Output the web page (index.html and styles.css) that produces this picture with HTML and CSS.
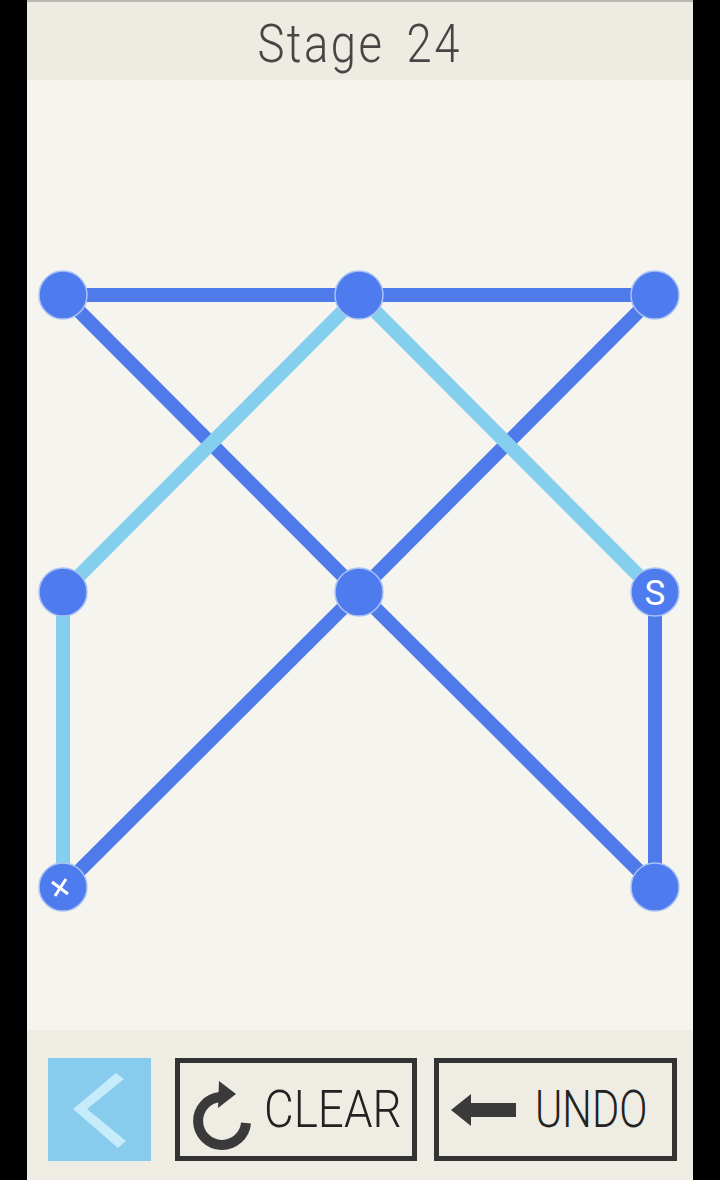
FILE: index.html
```html
<!DOCTYPE html>
<html>
<head>
<meta charset="utf-8">
<link rel="stylesheet" href="styles.css">
</head>
<body>
<div class="app">
  <header class="header"><span class="title">Stage 24</span></header>
  <main class="board">
    <svg class="graph" width="666" height="950" viewBox="27 80 666 950">
      <g class="edge dark">
        <line x1="63" y1="295" x2="359" y2="295"/>
        <line x1="359" y1="295" x2="655" y2="295"/>
        <line x1="63" y1="295" x2="359" y2="592"/>
        <line x1="655" y1="295" x2="359" y2="592"/>
        <line x1="359" y1="592" x2="63" y2="887"/>
        <line x1="359" y1="592" x2="655" y2="887"/>
        <line x1="655" y1="592" x2="655" y2="887"/>
      </g>
      <g class="edge light">
        <line x1="359" y1="295" x2="63" y2="592"/>
        <line x1="359" y1="295" x2="655" y2="592"/>
        <line x1="63" y1="592" x2="63" y2="887"/>
      </g>
      <g class="node">
        <circle cx="63" cy="295" r="24"/>
        <circle cx="359" cy="295" r="24"/>
        <circle cx="655" cy="295" r="24"/>
        <circle cx="63" cy="592" r="24"/>
        <circle cx="359" cy="592" r="24"/>
        <circle cx="655" cy="592" r="24"/>
        <circle cx="63" cy="887" r="24"/>
        <circle cx="655" cy="887" r="24"/>
      </g>
      <text class="start" x="655" y="605" text-anchor="middle">S</text>
      <g class="cross">
        <line x1="52" y1="882" x2="68" y2="894"/>
        <line x1="66" y1="879" x2="55" y2="896"/>
      </g>
    </svg>
  </main>
  <footer class="footer">
    <button class="back" aria-label="back">
      <svg width="103" height="103" viewBox="0 0 103 103">
        <polygon points="68,15 76,21 39,51 78,83 70,90 25,51" fill="#c6ebfa"/>
      </svg>
    </button>
    <button class="btn clear">
      <svg class="icon" width="68" height="78" viewBox="0 0 68 78">
        <path d="M30 19 A24 24 0 1 0 56 45" fill="none" stroke="#3a3a3a" stroke-width="10"/>
        <polygon points="29,3 46,16 28,30" fill="#3a3a3a"/>
      </svg>
      <span class="label">CLEAR</span>
    </button>
    <button class="btn undo">
      <svg class="icon" width="68" height="40" viewBox="0 0 68 40">
        <polygon points="1,20 21,4 21,13 66,13 66,27 21,27 21,36" fill="#3a3a3a"/>
      </svg>
      <span class="label">UNDO</span>
    </button>
  </footer>
</div>
</body>
</html>
```

FILE: styles.css
```css
html, body {
  margin: 0;
  padding: 0;
  background: #000;
}
.app {
  width: 666px;
  height: 1180px;
  margin-left: 27px;
  display: flex;
  flex-direction: column;
  background: #f6f4ee;
}
.header {
  height: 78px;
  border-top: 2px solid #b9b7b2;
  background: #eeebe3;
  display: flex;
  align-items: center;
  justify-content: center;
}
.title {
  display: inline-block;
  font-family: Roboto, "Liberation Sans", sans-serif;
  font-weight: 300;
  font-size: 54px;
  color: #464646;
  transform: scaleX(0.84);
  letter-spacing: 3px;
  word-spacing: 10px;
  margin-top: 4px;
}
.board {
  height: 950px;
  background: #f6f4ee;
}
.graph {
  display: block;
}
.edge line {
  stroke-width: 14;
}
.edge.dark line {
  stroke: #4f7aea;
}
.edge.light line {
  stroke: #84cfee;
}
.node circle {
  fill: #4e7bee;
  stroke: #aac2f6;
  stroke-width: 1.5;
}
.start {
  font-family: Roboto, "Liberation Sans", sans-serif;
  font-size: 35px;
  fill: #fff;
}
.cross line {
  stroke: #fff;
  stroke-width: 3;
}
.footer {
  flex: 1;
  background: #efece4;
  display: flex;
  align-items: flex-start;
  padding: 28px 0 0 21px;
  gap: 24px;
}
.back {
  width: 103px;
  height: 103px;
  padding: 0;
  border: none;
  background: #87ccec;
  display: block;
}
.back svg {
  display: block;
}
.btn {
  height: 103px;
  box-sizing: border-box;
  border: 5px solid #333;
  background: #efece4;
  display: flex;
  align-items: center;
  padding: 0;
}
.clear {
  width: 242px;
  padding-left: 10px;
}
.clear .icon {
  margin-top: 14px;
}
.undo {
  width: 243px;
  margin-left: -7px;
  padding-left: 11px;
}
.label {
  display: inline-block;
  font-family: Roboto, "Liberation Sans", sans-serif;
  font-weight: 300;
  font-size: 52px;
  color: #222;
  transform-origin: left center;
}
.clear .label {
  margin-left: 6px;
  transform: scaleX(0.88);
}
.undo .label {
  margin-left: 17px;
  transform: scaleX(0.8);
}
.icon {
  display: block;
  flex: none;
}
```
